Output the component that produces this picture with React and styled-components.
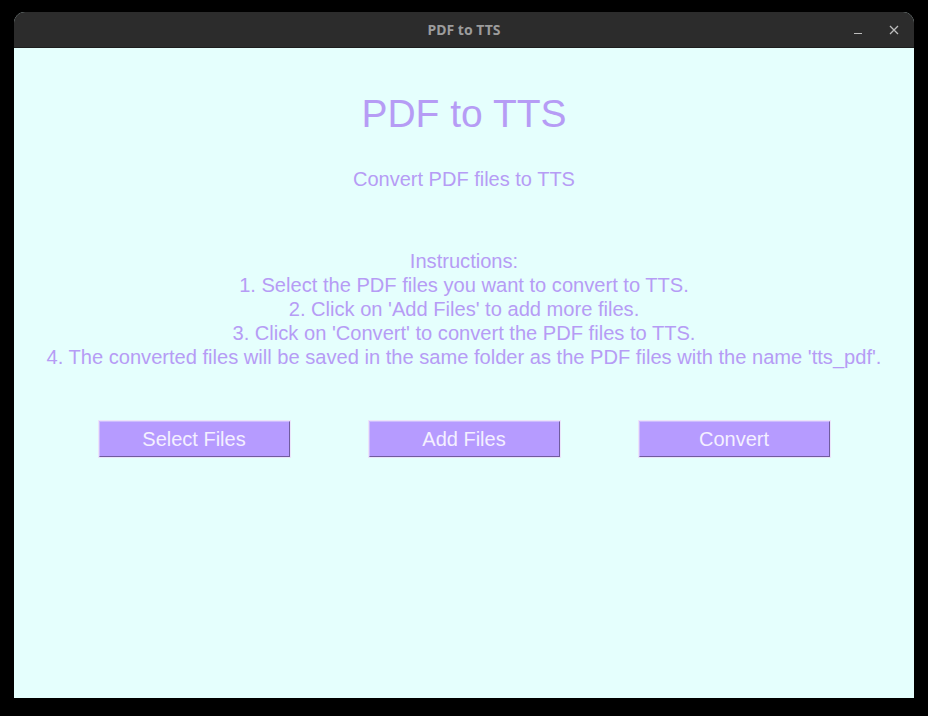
import React from "react";
import styled, { createGlobalStyle } from "styled-components";

const Global = createGlobalStyle`
  html, body { margin: 0; padding: 0; background: #000; }
  body { width: 928px; height: 716px; overflow: hidden; }
`;

const Screen = styled.div`
  width: 928px;
  height: 716px;
  box-sizing: border-box;
  padding: 12px 14px 18px 14px;
  display: flex;
  background: #000;
`;

const Window = styled.div`
  flex: 1;
  display: flex;
  flex-direction: column;
  border-radius: 11px 11px 0 0;
  overflow: hidden;
  background: #e5fffd;
`;

const TitleBar = styled.div`
  height: 36px;
  flex: none;
  background: #2c2c2c;
  position: relative;
  display: flex;
  align-items: center;
  justify-content: center;
  border-bottom: 1px solid #1e1e1e;
  box-sizing: border-box;
`;

const WinTitle = styled.div`
  font-family: "Noto Sans", "DejaVu Sans", sans-serif;
  font-weight: 700;
  font-size: 14px;
  color: #9c9c9c;
`;

const Controls = styled.div`
  position: absolute;
  right: 8px;
  top: 0;
  height: 100%;
  display: flex;
  align-items: center;
  gap: 12px;
`;

const CtlBtn = styled.div`
  width: 24px;
  height: 24px;
  display: flex;
  align-items: center;
  justify-content: center;
`;

const Content = styled.div`
  flex: 1;
  display: flex;
  flex-direction: column;
  align-items: center;
  padding-top: 44px;
  font-family: "Liberation Sans", Arial, sans-serif;
  color: #b69cf5;
`;

const Heading = styled.div`
  font-size: 39px;
  line-height: 44px;
`;

const Sub = styled.div`
  margin-top: 31px;
  font-size: 20px;
  line-height: 24px;
`;

const Instructions = styled.div`
  margin-top: 58px;
  font-size: 20.1px;
  line-height: 24px;
  text-align: center;
  white-space: nowrap;
`;

const ButtonRow = styled.div`
  margin-top: 51px;
  display: flex;
  gap: 79px;
`;

const TkButton = styled.button`
  width: 191px;
  height: 36px;
  box-sizing: border-box;
  background: #b69bff;
  border: 1px solid;
  border-color: #cdbcff #6f5c9e #6f5c9e #cdbcff;
  box-shadow: 0 0 0 1px #ebe4f9;
  color: #f4f0ff;
  font-family: "Liberation Sans", Arial, sans-serif;
  font-size: 20px;
  padding: 0;
  margin: 1px 0;
`;

const lines = [
  "Instructions:",
  "1. Select the PDF files you want to convert to TTS.",
  "2. Click on 'Add Files' to add more files.",
  "3. Click on 'Convert' to convert the PDF files to TTS.",
  "4. The converted files will be saved in the same folder as the PDF files with the name 'tts_pdf'.",
];

export default function App() {
  return (
    <>
      <Global />
      <Screen>
        <Window>
          <TitleBar>
            <WinTitle>PDF to TTS</WinTitle>
            <Controls>
              <CtlBtn>
                <svg width="12" height="12" viewBox="0 0 12 12">
                  <line x1="2" y1="9.5" x2="10" y2="9.5" stroke="#bdbdbd" strokeWidth="1.2" />
                </svg>
              </CtlBtn>
              <CtlBtn>
                <svg width="12" height="12" viewBox="0 0 12 12">
                  <path d="M2 2 L10 10 M10 2 L2 10" stroke="#bdbdbd" strokeWidth="1.3" />
                </svg>
              </CtlBtn>
            </Controls>
          </TitleBar>
          <Content>
            <Heading>PDF to TTS</Heading>
            <Sub>Convert PDF files to TTS</Sub>
            <Instructions>
              {lines.map((l) => (
                <div key={l}>{l}</div>
              ))}
            </Instructions>
            <ButtonRow>
              <TkButton>Select Files</TkButton>
              <TkButton>Add Files</TkButton>
              <TkButton>Convert</TkButton>
            </ButtonRow>
          </Content>
        </Window>
      </Screen>
    </>
  );
}
